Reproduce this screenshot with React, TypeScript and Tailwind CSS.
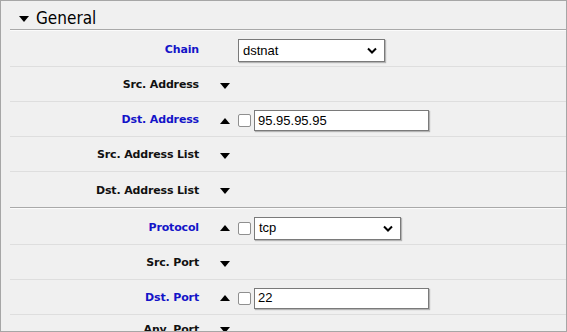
import React from "react";

const Down = () => (
  <svg width="10" height="6" viewBox="0 0 10 6" className="block">
    <polygon points="0,0 10,0 5,6" fill="#000" />
  </svg>
);
const Up = () => (
  <svg width="10" height="6" viewBox="0 0 10 6" className="block">
    <polygon points="0,6 10,6 5,0" fill="#000" />
  </svg>
);

const Check = () => (
  <div className="w-[13px] h-[13px] bg-white border border-[#8f8f8f] rounded-[2px] shrink-0" />
);

const Select = ({ value, w }: { value: string; w: string }) => (
  <div
    className={`${w} h-[23px] bg-white border border-[#7a7a7a] shadow-[1px_1px_1px_rgba(0,0,0,0.25)] flex items-center justify-between pl-[4px] pr-[7px] text-[13px] text-black`}
    style={{ fontFamily: '"Liberation Sans", Arial, sans-serif' }}
  >
    <span>{value}</span>
    <svg width="10" height="7" viewBox="0 0 10 7" className="block">
      <polyline points="1,1.5 5,5.5 9,1.5" fill="none" stroke="#000" strokeWidth="2" />
    </svg>
  </div>
);

const Input = ({ value }: { value: string }) => (
  <div
    className="w-[175px] h-[21px] bg-white border border-[#7a7a7a] shadow-[1px_1px_1px_rgba(0,0,0,0.25)] flex items-center pl-[3px] text-[13px] text-black"
    style={{ fontFamily: '"Liberation Sans", Arial, sans-serif' }}
  >
    {value}
  </div>
);

type RowProps = {
  label: string;
  blue?: boolean;
  arrow?: "up" | "down" | null;
  children?: React.ReactNode;
  h?: string;
  border?: boolean;
};

const Row = ({ label, blue, arrow, children, h = "h-[35px] pt-[3px]", border = true }: RowProps) => (
  <div className={`${h} flex items-center ${border ? "border-b border-[#dedede]" : ""}`}>
    <div
      className={`w-[190px] text-right pr-[1px] text-[11px] font-bold tracking-[-0.15px] ${blue ? "text-[#1414c8]" : "text-[#111]"}`}
      style={{ fontFamily: '"DejaVu Sans", Verdana, sans-serif' }}
    >
      {label}
    </div>
    <div className="w-[38px] pl-[20px] flex items-center">
      {arrow === "down" ? <Down /> : arrow === "up" ? <Up /> : null}
    </div>
    <div className="flex items-center gap-[3px]">{children}</div>
  </div>
);

const SectionLine = () => (
  <div className="h-[2px] border-t border-[#a9a9a9] border-b border-b-[#fbfbfb]" />
);

export default function App() {
  return (
    <div className="w-[567px] h-[332px] overflow-hidden bg-[#f0f0f0] border border-[#a6a6a6] box-border">
      <div className="ml-[9px]">
        <div className="h-[28px] pt-[6px] flex items-center pl-[9px] gap-[7px]">
          <svg width="10" height="6" viewBox="0 0 10 6" className="block mt-[1px]">
            <polygon points="0,0 10,0 5,6" fill="#000" />
          </svg>
          <span
            className="text-[17px] text-black leading-none"
            style={{ fontFamily: '"DejaVu Sans Condensed", "DejaVu Sans", Tahoma, sans-serif' }}
          >
            General
          </span>
        </div>
        <SectionLine />
        <Row label="Chain" blue h="h-[36px] pt-[4px]">
          <Select value="dstnat" w="w-[147px]" />
        </Row>
        <Row label="Src. Address" arrow="down" />
        <Row label="Dst. Address" blue arrow="up">
          <Check />
          <Input value="95.95.95.95" />
        </Row>
        <Row label="Src. Address List" arrow="down" />
        <Row label="Dst. Address List" arrow="down" border={false} />
        <SectionLine />
        <Row label="Protocol" blue arrow="up" h="h-[36px] pt-[3px]">
          <Check />
          <Select value="tcp" w="w-[147px]" />
        </Row>
        <Row label="Src. Port" arrow="down" />
        <Row label="Dst. Port" blue arrow="up" h="h-[35px] pt-[2px]">
          <Check />
          <Input value="22" />
        </Row>
        <Row label="Any. Port" arrow="down" border={false} h="h-[30px] pt-[0px]" />
      </div>
    </div>
  );
}
